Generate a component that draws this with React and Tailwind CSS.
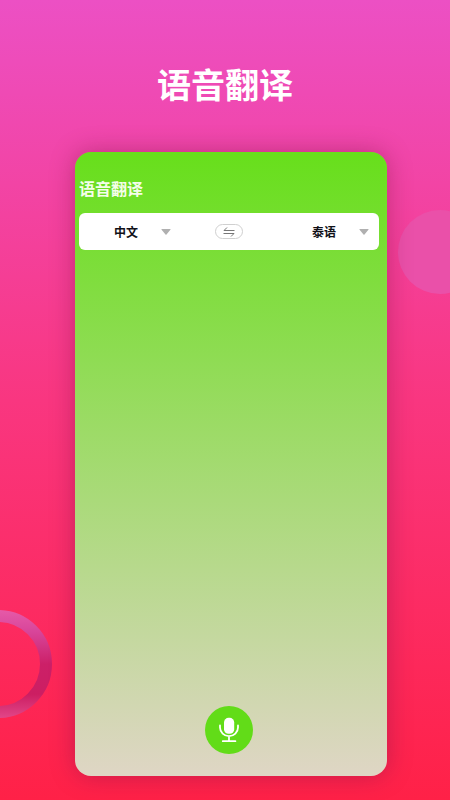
import { useState } from "react";

const languages = ["中文", "泰语", "英语", "日语"];

function LanguageSelect({ label, value, onChange }) {
  return (
    <div className="relative flex h-full items-center">
      <select
        aria-label={label}
        value={value}
        onChange={(e) => onChange(e.target.value)}
        className="h-full w-[57px] cursor-pointer appearance-none bg-transparent text-xs font-bold text-[#111118] outline-none"
      >
        {languages.map((name) => (
          <option key={name}>{name}</option>
        ))}
      </select>
      <svg
        className="pointer-events-none absolute right-0 h-[6px] w-[10px]"
        viewBox="0 0 10 6"
        aria-hidden="true"
      >
        <path d="M0.8 0H9.2Q10 .1 9.4 .8L5.5 5.6Q5 6 4.5 5.6L.6 .8Q0 .1 .8 0Z" fill="#b0b0b0" />
      </svg>
    </div>
  );
}

function Backdrop() {
  return (
    <div className="pointer-events-none absolute inset-0 overflow-hidden" aria-hidden="true">
      <div className="absolute top-[210px] -right-8 size-[84px] rounded-full bg-[#ea50a9]" />
      <svg className="absolute top-[610px] -left-14 size-[108px]" viewBox="0 0 108 108">
        <defs>
          <linearGradient id="ring" x1="54" y1="0" x2="54" y2="108" gradientUnits="userSpaceOnUse">
            <stop offset="0" stopColor="#e65aa8" />
            <stop offset="0.2" stopColor="#d8459a" />
            <stop offset="0.5" stopColor="#cc2068" />
            <stop offset="0.78" stopColor="#cc1e62" />
            <stop offset="1" stopColor="#e24688" />
          </linearGradient>
        </defs>
        <circle cx="54" cy="54" r="48" fill="none" stroke="url(#ring)" strokeWidth="12" />
      </svg>
    </div>
  );
}

export default function App() {
  const [source, setSource] = useState("中文");
  const [target, setTarget] = useState("泰语");

  const swap = () => {
    setSource(target);
    setTarget(source);
  };

  return (
    <div className="relative flex min-h-screen flex-col bg-linear-to-b/srgb from-[#ec50c4] via-[#f93680] to-[#ff2147] pb-6 font-['Noto_Sans_CJK_SC',sans-serif]">
      <Backdrop />
      <h1 className="relative pt-15 text-center text-[34px] leading-12 font-bold text-white">语音翻译</h1>
      <main className="relative mt-11 mr-[63px] ml-[75px] flex grow flex-col rounded-2xl bg-linear-to-b/srgb from-[#67df1b] to-[#dfd6c5] pt-6 pr-2 pb-[22px] pl-1 shadow-[0_0_24px_rgba(130,20,70,0.45)]">
        <h2 className="text-base leading-6 font-bold text-[#f4fdea]">语音翻译</h2>
        <div className="mt-[13px] grid h-[37px] grid-cols-[1fr_auto_1fr] items-center rounded-md bg-white">
          <div className="flex h-[37px] justify-end pr-11">
            <LanguageSelect label="源语言" value={source} onChange={setSource} />
          </div>
          <button
            type="button"
            aria-label="交换语言"
            onClick={swap}
            className="flex h-[15px] w-7 items-center justify-center rounded-full border border-[#d0d0d0]"
          >
            <svg className="h-[10px] w-3" viewBox="0 0 12 10" fill="none" stroke="#777" strokeWidth="1" aria-hidden="true">
              <path d="M4 .5L1 3.5H11.5M.5 6.5H11L8 9.5" />
            </svg>
          </button>
          <div className="flex h-[37px] justify-end pr-[10px]">
            <LanguageSelect label="目标语言" value={target} onChange={setTarget} />
          </div>
        </div>
        <button
          type="button"
          aria-label="开始录音"
          className="mt-auto ml-[126px] flex size-12 items-center justify-center rounded-full bg-[#62dc18]"
        >
          <svg className="h-[26px] w-5" viewBox="0 0 20 26" fill="none" aria-hidden="true">
            <rect x="5" y="0.8" width="10.2" height="16" rx="4.6" fill="white" />
            <path
              d="M1 8.5V10.5A9 8.6 0 0 0 19 10.5V8.5M10 19.5V24M3.8 24.2H16.4"
              stroke="white"
              strokeWidth="1.8"
              strokeLinecap="round"
            />
          </svg>
        </button>
      </main>
    </div>
  );
}
